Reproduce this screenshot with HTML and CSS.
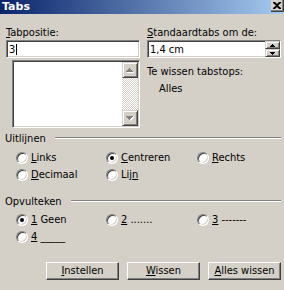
FILE: index.html
```html
<!DOCTYPE html>
<html>
<head>
<meta charset="utf-8">
<link rel="stylesheet" href="styles.css">
</head>
<body>
<div class="window">
  <div class="titlebar">
    <span class="title">Tabs</span>
    <span class="close"><svg width="8" height="7" viewBox="0 0 8 7"><path d="M0 0h2l2 2 2-2h2v1L5 3.5 8 6v1H6L4 5 2 7H0V6l3-2.5L0 1z"/></svg></span>
  </div>
  <div class="content">
    <div class="top">
      <div class="col left">
        <div class="label"><u>T</u>abpositie:</div>
        <div class="field"><span class="val">3</span><span class="caret"></span></div>
        <div class="listbox">
          <div class="list-area"></div>
          <div class="vscroll">
            <div class="sbtn"><svg width="8" height="5" viewBox="0 0 8 5"><path fill="#fff" transform="translate(1,1)" d="M3 0h1v1h1v1h1v1h1v1H0V3h1V2h1V1h1z"/><path fill="#808080" d="M3 0h1v1h1v1h1v1h1v1H0V3h1V2h1V1h1z"/></svg></div>
            <div class="track"></div>
            <div class="sbtn"><svg width="8" height="5" viewBox="0 0 8 5"><path fill="#fff" transform="translate(1,1)" d="M0 0h7v1H6v1H5v1H4v1H3V3H2V2H1V1H0z"/><path fill="#808080" d="M0 0h7v1H6v1H5v1H4v1H3V3H2V2H1V1H0z"/></svg></div>
          </div>
        </div>
      </div>
      <div class="col right">
        <div class="label"><u>S</u>tandaardtabs om de:</div>
        <div class="field spin">
          <span class="val">1,4 cm</span>
          <div class="spinbtns">
            <div class="sbtn half"><svg width="5" height="3" viewBox="0 0 5 3"><path d="M2 0h1v1h1v1h1v1H0V2h1V1h1z"/></svg></div>
            <div class="sbtn half"><svg width="5" height="3" viewBox="0 0 5 3"><path d="M0 0h5v1H4v1H3v1H2V2H1V1H0z"/></svg></div>
          </div>
        </div>
        <div class="info">Te wissen tabstops:</div>
        <div class="info sub">Alles</div>
      </div>
    </div>

    <div class="group g1">
      <div class="legend"><span>Uitlijnen</span><span class="rule"></span></div>
      <div class="radios">
        <label class="opt"><span class="radio"></span><span><u>L</u>inks</span></label>
        <label class="opt"><span class="radio on"></span><span><u>C</u>entreren</span></label>
        <label class="opt"><span class="radio"></span><span><u>R</u>echts</span></label>
        <label class="opt"><span class="radio"></span><span><u>D</u>ecimaal</span></label>
        <label class="opt"><span class="radio"></span><span>Lij<u>n</u></span></label>
      </div>
    </div>

    <div class="group g2">
      <div class="legend"><span>Opvulteken</span><span class="rule"></span></div>
      <div class="radios">
        <label class="opt"><span class="radio on"></span><span><u>1</u> Geen</span></label>
        <label class="opt"><span class="radio"></span><span><u>2</u> .......</span></label>
        <label class="opt"><span class="radio"></span><span><u>3</u> -------</span></label>
        <label class="opt"><span class="radio"></span><span><u>4</u> _____</span></label>
      </div>
    </div>

    <div class="buttons">
      <button class="btn"><u>I</u>nstellen</button>
      <button class="btn"><u>W</u>issen</button>
      <button class="btn"><u>A</u>lles wissen</button>
    </div>
  </div>
</div>
</body>
</html>
```

FILE: styles.css
```css
* { box-sizing: border-box; }
html, body { margin: 0; padding: 0; }
body {
  background: #d4d0c8;
}
.window {
  width: 284px;
  height: 290px;
  background: #d4d0c8;
  font: 11px "DejaVu Sans Condensed", "DejaVu Sans", sans-serif;
  color: #000;
  overflow: hidden;
}
u { text-decoration: underline; text-underline-offset: 1px; }

.titlebar {
  height: 14px;
  display: flex;
  align-items: flex-start;
  background: linear-gradient(90deg, #0a246a 0%, #a6caf0 100%);
}
.title {
  color: #fff;
  font-weight: bold;
  font-family: "DejaVu Sans", sans-serif;
  font-size: 11px;
  line-height: 13px;
  padding-left: 2px;
}
.close {
  margin-left: auto;
  width: 13px;
  height: 12px;
  background: #d4d0c8;
  border-right: 1px solid #404040;
  border-bottom: 1px solid #404040;
  box-shadow: inset -1px -1px 0 #808080;
  display: flex;
  align-items: center;
  justify-content: center;
  padding-bottom: 1px;
}
.close svg { display: block; fill: #000; }

.content { padding-top: 12px; }
.top { display: flex; }
.left { margin-left: 6px; width: 134px; }
.right { margin-left: 7px; width: 134px; }
.label { height: 13px; line-height: 13px; margin-bottom: 1px; white-space: nowrap; }

.field, .listbox {
  border: 1px solid;
  border-color: #808080 #fff #fff #808080;
  box-shadow: inset 1px 1px 0 #404040, inset -1px -1px 0 #d4d0c8;
  background: #fff;
}
.field {
  height: 18px;
  display: flex;
  align-items: center;
  padding-left: 2px;
}
.field .val { line-height: 14px; padding-top: 1px; }
.caret {
  display: inline-block;
  width: 1px;
  height: 11px;
  background: #000;
  margin-left: 1px;
  margin-top: 1px;
}
.listbox {
  margin: 2px 0 0 6px;
  height: 68px;
  padding: 1px;
  display: flex;
}
.list-area { flex: 1; }
.vscroll { width: 16px; display: flex; flex-direction: column; }
.track {
  flex: 1;
  background: repeating-conic-gradient(#d4d0c8 0 25%, #ffffff 0 50%) 0 0 / 2px 2px;
}
.sbtn {
  width: 16px;
  height: 16px;
  background: #d4d0c8;
  border: 1px solid;
  border-color: #d4d0c8 #404040 #404040 #d4d0c8;
  box-shadow: inset 1px 1px 0 #fff, inset -1px -1px 0 #808080;
  display: flex;
  align-items: center;
  justify-content: center;
}
.sbtn svg { display: block; }

.spin { padding-right: 0; }
.spin .val { flex: 1; }
.spinbtns { width: 15px; height: 16px; display: flex; flex-direction: column; }
.sbtn.half { width: 15px; height: 8px; }
.sbtn.half svg { fill: #000; }

.info { line-height: 13px; margin-top: 7px; white-space: nowrap; }
.info.sub { margin-top: 4px; padding-left: 12px; }

.g1 { margin-top: 4px; }
.g2 { margin-top: 12px; }
.legend {
  display: flex;
  height: 13px;
  line-height: 13px;
  padding-left: 5px;
  padding-right: 3px;
}
.rule {
  flex: 1;
  height: 2px;
  margin-top: 5px;
  margin-left: 9px;
  border-top: 1px solid #808080;
  border-bottom: 1px solid #fff;
}
.radios {
  display: grid;
  grid-template-columns: 90px 91px auto;
  grid-auto-rows: 17px;
  padding-left: 16px;
  margin-top: 4px;
}
.g2 .radios { margin-top: 3px; }
.opt {
  display: flex;
  align-items: center;
  white-space: nowrap;
}
.radio {
  position: relative;
  width: 12px;
  height: 12px;
  flex: none;
  border-radius: 50%;
  background: #fff;
  border: 1px solid;
  border-color: #808080 #fff #fff #808080;
  box-shadow: inset 1px 1px 0 #404040, inset -1px -1px 0 #d4d0c8;
  margin-right: 3px;
}
.radio.on::after {
  content: "";
  position: absolute;
  left: 3px;
  top: 3px;
  width: 4px;
  height: 4px;
  border-radius: 50%;
  background: #000;
}

.buttons {
  display: flex;
  justify-content: flex-end;
  gap: 8px;
  padding-right: 3px;
  margin-top: 17px;
}
.btn {
  width: 73px;
  height: 18px;
  padding: 0;
  font: inherit;
  color: #000;
  background: #d4d0c8;
  border: 1px solid;
  border-color: #fff #404040 #404040 #fff;
  box-shadow: inset -1px -1px 0 #808080;
  border-radius: 0;
  line-height: 14px;
}
```
